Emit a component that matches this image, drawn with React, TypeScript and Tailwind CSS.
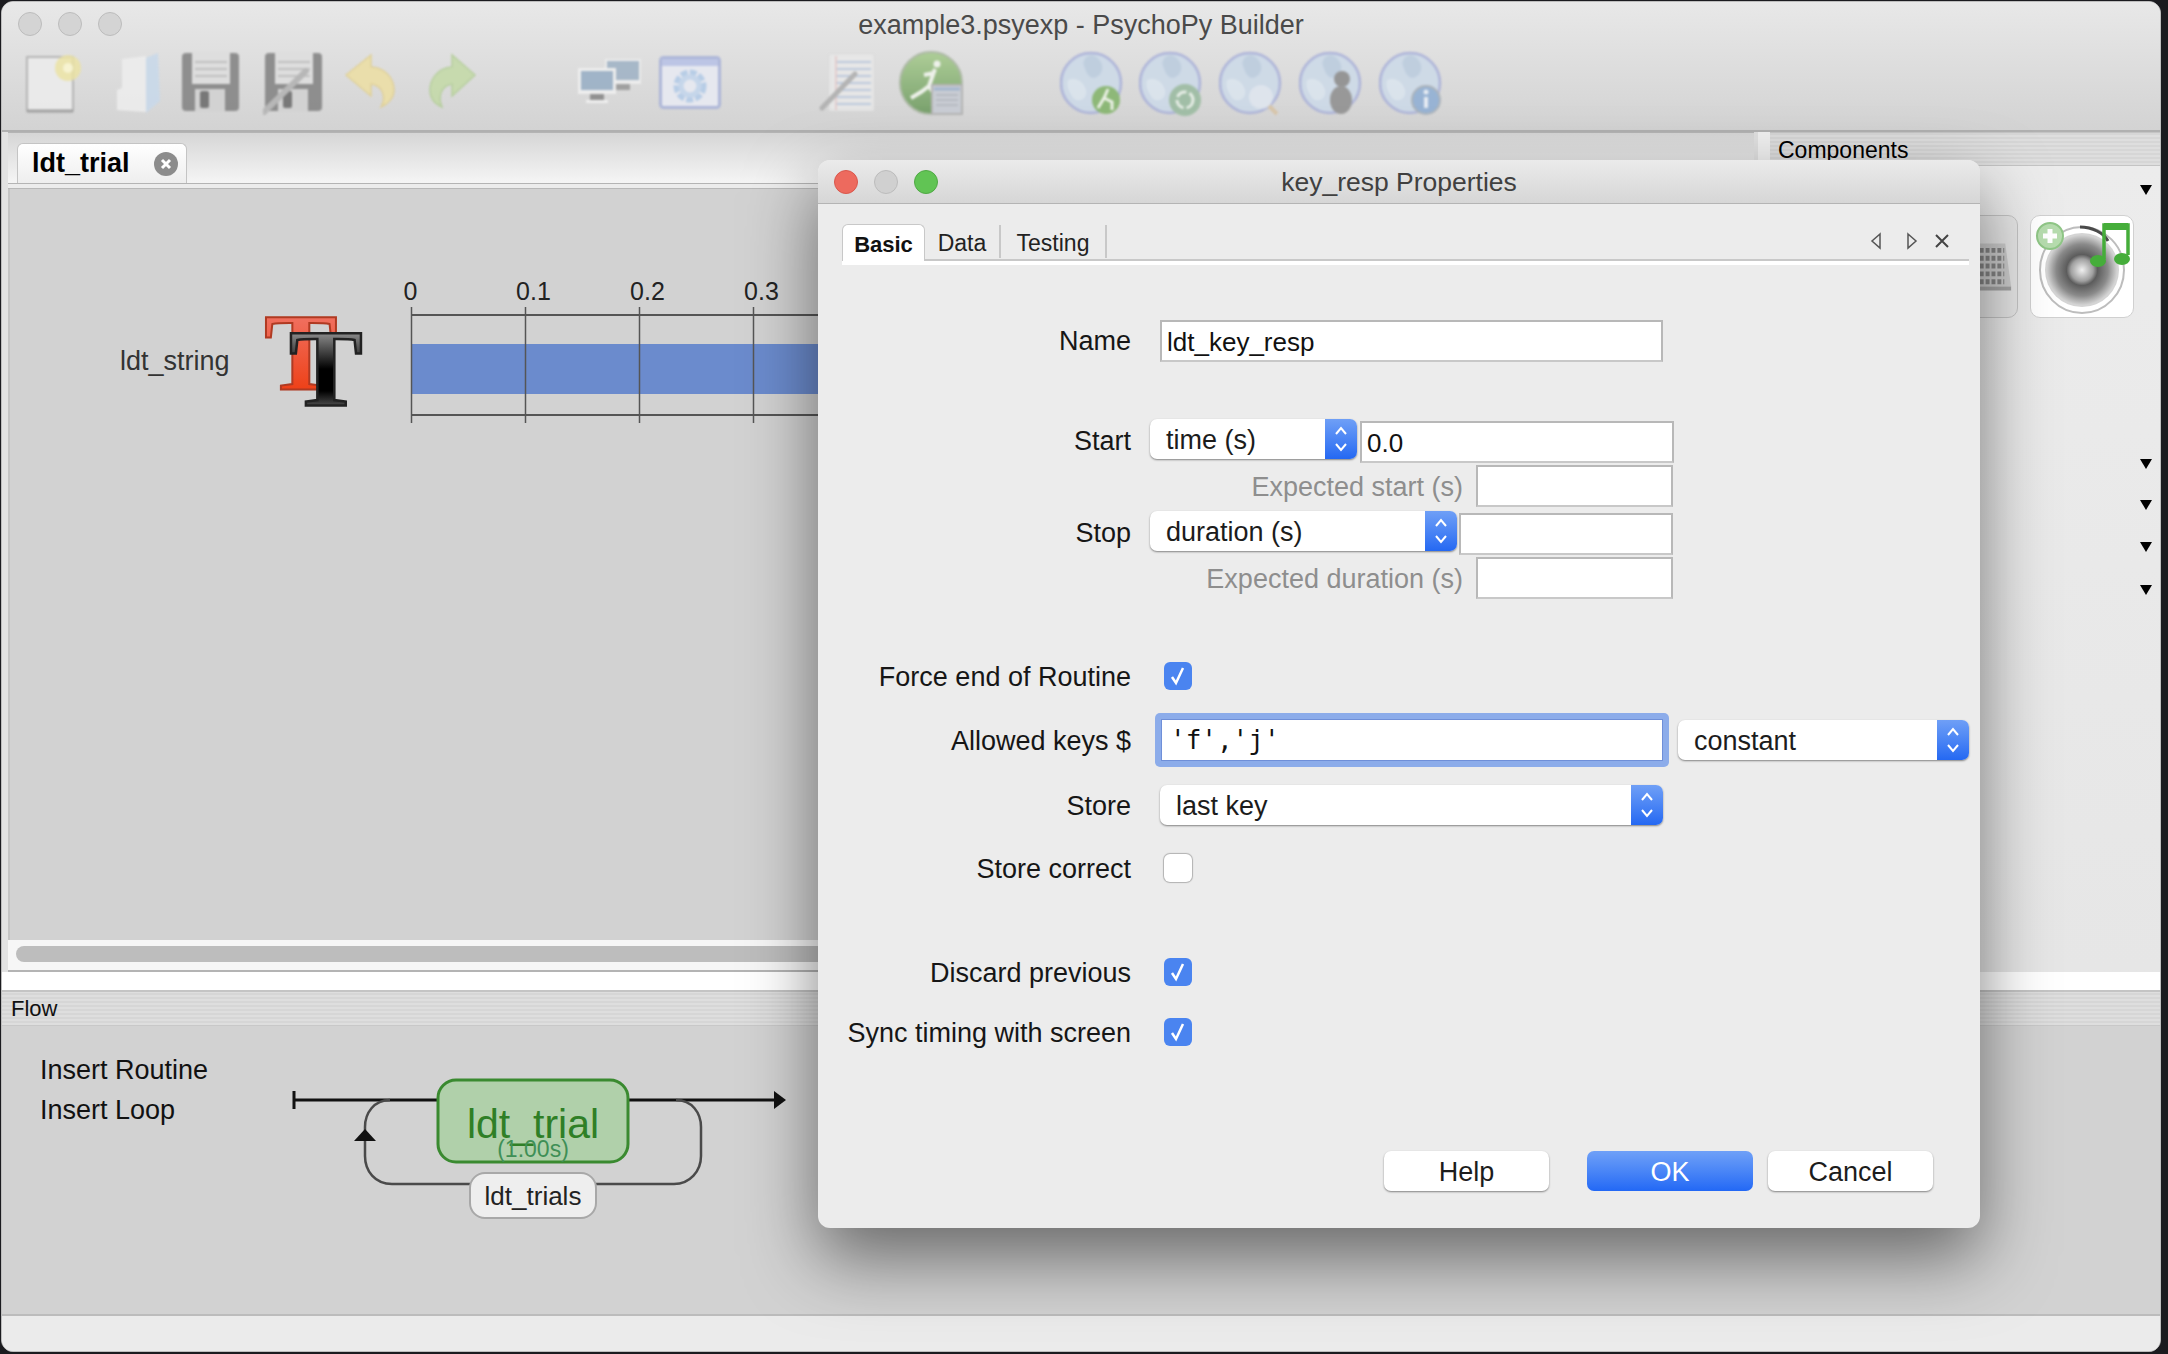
import { ReactNode } from "react";

const stripes =
    "bg-[repeating-linear-gradient(0deg,#dedede_0px,#dedede_2px,#d6d6d6_2px,#d6d6d6_4px)]";

function Lights({ colors }: { colors: string[] }) {
    return (
        <div className="flex gap-[16px]">
            {colors.map((c, i) => (
                <div
                    key={i}
                    className={`h-[24px] w-[24px] rounded-full border ${c}`}
                />
            ))}
        </div>
    );
}

function Floppy({ pen }: { pen?: boolean }) {
    return (
        <svg width="62" height="64" viewBox="0 0 62 64">
            <rect x="2" y="2" width="57" height="58" rx="4" fill="#868686" />
            <rect x="12" y="2" width="38" height="31" fill="#dedede" />
            <path d="M15 11H47M15 18H47M15 25H47" stroke="#bdbdbd" strokeWidth="2" />
            <rect x="15" y="38" width="30" height="22" fill="#d2d2d2" />
            <rect x="20" y="40" width="9" height="17" rx="2" fill="#6e6e6e" />
            {pen && (
                <path d="M43 20L0 62" stroke="#b4b4b4" strokeWidth="6" strokeLinecap="round" />
            )}
        </svg>
    );
}

function NewDoc() {
    return (
        <svg width="58" height="64" viewBox="0 0 58 64">
            <rect x="1" y="6" width="46" height="54" fill="#ececec" stroke="#b2b2b2" strokeWidth="2" />
            <path d="M1 60H47" stroke="#9a9a9a" strokeWidth="3" />
            <circle cx="42" cy="17" r="13" fill="#eee49a" opacity="0.8" />
            <circle cx="42" cy="17" r="5" fill="#faf6d0" />
        </svg>
    );
}

function FolderIcon() {
    return (
        <svg width="54" height="64" viewBox="0 0 54 64">
            <path d="M38 7L50 2L52 50L38 62Z" fill="#c9d9ea" />
            <path d="M14 8L38 5V61L9 59V39L14 37Z" fill="#ededed" />
        </svg>
    );
}

function ArrowIcon({ d, fill, stroke }: { d: string; fill: string; stroke: string }) {
    return (
        <svg width="52" height="60" viewBox="0 0 52 60">
            <path d={d} fill={fill} stroke={stroke} strokeWidth="1.5" />
        </svg>
    );
}

function Monitors() {
    return (
        <svg width="64" height="52" viewBox="0 0 64 52">
            <rect x="27" y="2" width="36" height="25" fill="#eeeeee" />
            <rect x="29" y="4" width="32" height="19" fill="#a2b4c6" />
            <rect x="38" y="27" width="14" height="6" fill="#9a9a9a" />
            <rect x="0" y="11" width="38" height="26" fill="#f0f0f0" />
            <rect x="3" y="14" width="32" height="19" fill="#9ab0c6" />
            <rect x="12" y="37" width="14" height="6" fill="#8a8a8a" />
            <rect x="8" y="43" width="22" height="3" fill="#f2f2f2" />
        </svg>
    );
}

function SettingsIcon() {
    return (
        <svg width="62" height="54" viewBox="0 0 62 54">
            <rect x="1.5" y="1.5" width="59" height="50" rx="3" fill="#e8eaf2" stroke="#a9b3d8" strokeWidth="3" />
            <rect x="3" y="3" width="56" height="7" fill="#b9c3e6" />
            <circle cx="31" cy="30" r="12" fill="none" stroke="#b4cce8" strokeWidth="9" strokeDasharray="6 2" />
            <circle cx="31" cy="30" r="9" fill="none" stroke="#c4d6ec" strokeWidth="5" />
        </svg>
    );
}

function NotesIcon() {
    return (
        <svg width="56" height="62" viewBox="0 0 56 62">
            <rect x="10" y="2" width="45" height="57" fill="#e8e8e8" stroke="#dadada" />
            <path d="M17 10H52M17 17H52M17 24H52M17 31H52M17 38H52M17 45H52M17 52H52" stroke="#bac8dc" strokeWidth="2" />
            <path d="M17 4V58" stroke="#e3c4c4" strokeWidth="1.5" />
            <path d="M36 22L3 56" stroke="#b0b0b0" strokeWidth="5" strokeLinecap="round" />
        </svg>
    );
}

function RunIcon() {
    return (
        <svg width="66" height="66" viewBox="0 0 66 66">
            <defs>
                <linearGradient id="run" x1="0" y1="0" x2="0" y2="1">
                    <stop offset="0" stopColor="#a9cc90" />
                    <stop offset="1" stopColor="#6f9b62" />
                </linearGradient>
            </defs>
            <circle cx="32" cy="33" r="31" fill="url(#run)" stroke="#a8b5a0" strokeWidth="2" />
            <circle cx="38" cy="14" r="3.5" fill="#f0f4ec" />
            <path d="M36 19L30 36L22 42L12 48M30 36L37 47M35 23L25 25" fill="none" stroke="#f0f4ec" strokeWidth="4" />
            <rect x="33" y="35" width="30" height="29" fill="#c8ccd4" stroke="#b0b0b0" strokeWidth="2" />
            <path d="M35 39H61" stroke="#9fb2cc" strokeWidth="3" />
            <path d="M37 45H59M37 50H59M37 55H59" stroke="#b4b8c0" strokeWidth="2" />
        </svg>
    );
}

function Globe({ children }: { children: ReactNode }) {
    return (
        <svg width="66" height="66" viewBox="0 0 66 66">
            <circle cx="31" cy="33" r="30" fill="#cddae8" stroke="#a9b0d8" strokeWidth="2.5" />
            <path d="M32 5C42 8 46 20 38 26C30 32 26 22 24 16C22 10 26 6 32 5Z" fill="#bccddf" />
            <path d="M8 30C16 26 24 32 26 40C28 50 16 54 12 46C9 41 6 36 8 30Z" fill="#dbe5ee" />
            {children}
        </svg>
    );
}

function Triangle() {
    return (
        <div className="h-0 w-0 border-x-[6px] border-t-[10px] border-x-transparent border-t-black" />
    );
}

function Speaker() {
    return (
        <svg width="100" height="100" viewBox="0 0 100 100">
            <defs>
                <radialGradient id="cone" cx="0.5" cy="0.5" r="0.5">
                    <stop offset="0" stopColor="#f0f0f0" />
                    <stop offset="0.3" stopColor="#a0a0a0" />
                    <stop offset="0.42" stopColor="#5c5c5c" />
                    <stop offset="0.7" stopColor="#8a8a8a" />
                    <stop offset="0.95" stopColor="#d4d4d4" />
                </radialGradient>
            </defs>
            <ellipse cx="50" cy="53" rx="42" ry="43" fill="#ffffff" stroke="#bdbdbd" strokeWidth="2" />
            <circle cx="50" cy="53" r="37" fill="url(#cone)" />
            <path d="M48 10C60 10 72 16 76 24" stroke="#4a4a4a" strokeWidth="3" fill="none" />
            <circle cx="18" cy="19" r="13" fill="#b6dcae" stroke="#8fc686" strokeWidth="2" />
            <path d="M18 12V26M11 19H25" stroke="#ffffff" strokeWidth="5" />
            <path d="M72 42V8H96V38" stroke="#45ad3a" strokeWidth="3.5" fill="none" />
            <path d="M72 6H96V13H72Z" fill="#45ad3a" />
            <ellipse cx="66" cy="44" rx="8" ry="6" fill="#45ad3a" />
            <ellipse cx="90" cy="42" rx="8" ry="6" fill="#45ad3a" />
        </svg>
    );
}

function Keyboard() {
    const rows = [0, 1, 2, 3, 4];
    return (
        <svg width="104" height="60" viewBox="0 0 104 60">
            <path d="M0 6H92L98 50H0Z" fill="#cccccc" />
            <path d="M0 50H98V54H0Z" fill="#a4a4a4" />
            {rows.map((r) => (
                <path
                    key={r}
                    d={`M0 ${13 + r * 8}H91`}
                    stroke="#858585"
                    strokeWidth="5"
                    strokeDasharray="4 2"
                />
            ))}
        </svg>
    );
}

function SelectBox({ label, width }: { label: string; width: string }) {
    return (
        <div
            className={`flex h-[40px] items-stretch rounded-[7px] bg-white shadow-[0_1px_2px_rgba(0,0,0,0.45)] ${width}`}
        >
            <div className="flex flex-1 items-center pl-[16px] pt-[3px] text-[27px] text-[#1c1c1c]">
                {label}
            </div>
            <div className="flex w-[32px] flex-col items-center justify-center rounded-r-[7px] bg-gradient-to-b from-[#6f9ff6] to-[#2468f2]">
                <svg width="16" height="32" viewBox="0 0 16 32">
                    <path d="M3 11L8 5L13 11M3 21L8 27L13 21" fill="none" stroke="#ffffff" strokeWidth="2" />
                </svg>
            </div>
        </div>
    );
}

function TextInput({ value, width, extra }: { value?: string; width: string; extra?: string }) {
    return (
        <div
            className={`flex h-[42px] items-center border-2 border-[#b8b8b8] border-b-[#c8c8c8] bg-white pl-[5px] pt-[3px] text-[26px] text-[#111] ${width} ${extra ?? ""}`}
        >
            {value}
        </div>
    );
}

function CheckBox({ checked }: { checked?: boolean }) {
    return checked ? (
        <div className="flex h-[28px] w-[28px] items-center justify-center rounded-[6px] bg-[#4a84f0]">
            <svg width="20" height="24" viewBox="0 0 20 24">
                <path d="M4 13L8 19L15 4" fill="none" stroke="#ffffff" strokeWidth="2.5" />
            </svg>
        </div>
    ) : (
        <div className="h-[28px] w-[28px] rounded-[6px] bg-white shadow-[0_0_1px_1px_rgba(0,0,0,0.25)]" />
    );
}

function Label({ children, grey }: { children: ReactNode; grey?: boolean }) {
    return (
        <div className={`whitespace-nowrap pt-[2px] text-right text-[27px] ${grey ? "text-[#8e8e8e]" : "text-[#161616]"}`}>
            {children}
        </div>
    );
}

function CheckRow({ label, checked, top }: { label: string; checked?: boolean; top: string }) {
    return (
        <div className={`flex h-[28px] items-center ${top}`}>
            <div className="w-[313px]">
                <Label>{label}</Label>
            </div>
            <div className="ml-[33px]">
                <CheckBox checked={checked} />
            </div>
        </div>
    );
}

function DialogButton({ label, primary, extra }: { label: string; primary?: boolean; extra?: string }) {
    return (
        <div
            className={`flex h-[40px] w-[165px] items-center justify-center rounded-[7px] pt-[2px] text-[27px] ${
                primary
                    ? "bg-gradient-to-b from-[#6fa0f7] to-[#2268f5] text-white"
                    : "bg-white text-[#1c1c1c] shadow-[0_1px_2px_rgba(0,0,0,0.45)]"
            } ${extra ?? ""}`}
        >
            {label}
        </div>
    );
}

function PropertiesDialog() {
    return (
        <div className="absolute left-[818px] top-[160px] flex h-[1068px] w-[1162px] flex-col rounded-[12px] bg-[#ececec] shadow-[0_30px_70px_rgba(0,0,0,0.5)]">
            <div className="relative flex h-[44px] items-center justify-center rounded-t-[12px] border-b border-[#b4b4b4] bg-gradient-to-b from-[#ebebeb] to-[#d6d6d6]">
                <div className="absolute left-[16px] top-[10px]">
                    <Lights
                        colors={[
                            "bg-[#ed6a5e] border-[#d9574c]",
                            "bg-[#d0d0d0] border-[#bcbcbc]",
                            "bg-[#61c454] border-[#50a945]",
                        ]}
                    />
                </div>
                <span className="pt-[2px] text-[26.5px] text-[#404040]">key_resp Properties</span>
            </div>

            <div className="flex h-[61px] flex-col">
                <div className="flex flex-1 items-end pl-[24px] pr-[11px]">
                    <div className="flex w-full items-end border-b-2 border-[#c8c8c8]">
                        <div className="-mb-[2px] flex h-[37px] w-[83px] items-center justify-center rounded-t-[6px] border border-b-0 border-[#c8c8c8] bg-white pt-[3px] text-[22px] font-bold text-[#111]">
                            Basic
                        </div>
                        <div className="mb-[1px] flex h-[33px] w-[76px] items-center justify-center border-r-2 border-[#c8c8c8] pt-[3px] text-[23px] text-[#222]">
                            Data
                        </div>
                        <div className="mb-[1px] flex h-[33px] w-[106px] items-center justify-center border-r-2 border-[#c8c8c8] pt-[3px] text-[23px] text-[#222]">
                            Testing
                        </div>
                        <div className="mb-[9px] ml-auto mr-[19px] flex items-center">
                            <svg width="12" height="18" viewBox="0 0 12 18">
                                <path d="M10 2L2 9L10 16Z" fill="none" stroke="#555" strokeWidth="1.5" />
                            </svg>
                            <svg className="ml-[24px]" width="12" height="18" viewBox="0 0 12 18">
                                <path d="M2 2L10 9L2 16Z" fill="none" stroke="#555" strokeWidth="1.5" />
                            </svg>
                            <svg className="ml-[16px]" width="16" height="16" viewBox="0 0 16 16">
                                <path d="M2 2L14 14M14 2L2 14" stroke="#444" strokeWidth="2" />
                            </svg>
                        </div>
                    </div>
                </div>
                <div className="ml-[24px] mr-[11px] h-[4px] bg-white" />
            </div>

            <div className="flex flex-1 flex-col">
                <div className="mt-[55px] flex h-[41px] items-center">
                    <div className="w-[313px]">
                        <Label>Name</Label>
                    </div>
                    <TextInput value="ldt_key_resp" width="w-[503px] ml-[29px]" extra="h-[41px]" />
                </div>

                <div className="mt-[58px] flex h-[43px] items-start">
                    <div className="w-[313px]">
                        <Label>Start</Label>
                    </div>
                    <div className="ml-[19px]">
                        <SelectBox label="time (s)" width="w-[207px]" />
                    </div>
                    <TextInput value="0.0" width="w-[314px] ml-[3px] mt-[2px]" />
                </div>
                <div className="mt-[3px] flex h-[42px] items-center">
                    <div className="w-[645px]">
                        <Label grey>Expected start (s)</Label>
                    </div>
                    <TextInput width="w-[197px] ml-[13px]" />
                </div>
                <div className="mt-[4px] flex h-[43px] items-start">
                    <div className="w-[313px]">
                        <Label>Stop</Label>
                    </div>
                    <div className="ml-[19px]">
                        <SelectBox label="duration (s)" width="w-[307px]" />
                    </div>
                    <TextInput width="w-[214px] ml-[2px] mt-[2px]" />
                </div>
                <div className="mt-[3px] flex h-[42px] items-center">
                    <div className="w-[645px]">
                        <Label grey>Expected duration (s)</Label>
                    </div>
                    <TextInput width="w-[197px] ml-[13px]" />
                </div>

                <CheckRow label="Force end of Routine" checked top="mt-[63px]" />

                <div className="mt-[23px] flex h-[54px] items-center">
                    <div className="w-[313px]">
                        <Label>Allowed keys $</Label>
                    </div>
                    <div className="ml-[24px] flex h-[54px] w-[514px] items-center justify-center rounded-[5px] bg-[#8cacea]">
                        <div className="flex h-[42px] w-[502px] items-center border border-[#6f8fd8] bg-white pl-[8px] font-['DejaVu_Sans_Mono',monospace] text-[26px] text-[#111]">
                            'f','j'
                        </div>
                    </div>
                    <div className="ml-[9px]">
                        <SelectBox label="constant" width="w-[291px]" />
                    </div>
                </div>

                <div className="mt-[18px] flex h-[40px] items-center">
                    <div className="w-[313px]">
                        <Label>Store</Label>
                    </div>
                    <div className="ml-[29px]">
                        <SelectBox label="last key" width="w-[503px]" />
                    </div>
                </div>

                <CheckRow label="Store correct" top="mt-[29px]" />
                <CheckRow label="Discard previous" checked top="mt-[76px]" />
                <CheckRow label="Sync timing with screen" checked top="mt-[32px]" />

                <div className="mt-[105px] flex pl-[566px]">
                    <DialogButton label="Help" />
                    <DialogButton label="OK" primary extra="ml-[38px] w-[166px]" />
                    <DialogButton label="Cancel" extra="ml-[15px]" />
                </div>
            </div>
        </div>
    );
}

function Toolbar() {
    return (
        <div className="flex h-[70px] items-center pl-[24px] opacity-90 blur-[0.8px]">
            <NewDoc />
            <div className="ml-[24px]">
                <FolderIcon />
            </div>
            <div className="ml-[18px]">
                <Floppy />
            </div>
            <div className="ml-[21px]">
                <Floppy pen />
            </div>
            <div className="ml-[19px]">
                <ArrowIcon
                    d="M2 22L27 2L27 14C43 15 50 27 50 37C50 45 44 51 37 54C42 45 40 33 27 31L27 43Z"
                    fill="#ecdfa6"
                    stroke="#e0cf92"
                />
            </div>
            <div className="ml-[31px]">
                <ArrowIcon
                    d="M48 22L25 2L25 14C10 15 3 27 3 37C3 45 8 51 15 54C11 45 13 33 25 31L25 43Z"
                    fill="#c5daaa"
                    stroke="#b3cd98"
                />
            </div>
            <div className="ml-[99px]">
                <Monitors />
            </div>
            <div className="ml-[17px]">
                <SettingsIcon />
            </div>
            <div className="ml-[98px]">
                <NotesIcon />
            </div>
            <div className="ml-[24px]">
                <RunIcon />
            </div>
            <div className="ml-[95px]">
                <Globe>
                    <circle cx="46" cy="50" r="14" fill="#86b56e" />
                    <path d="M48 39L44 48L38 58M44 48L52 52L52 60" stroke="#eef4e8" strokeWidth="3" fill="none" />
                </Globe>
            </div>
            <div className="ml-[13px]">
                <Globe>
                    <circle cx="46" cy="50" r="16" fill="#9cbca2" />
                    <circle cx="46" cy="50" r="8" fill="none" stroke="#e8f0e8" strokeWidth="3" strokeDasharray="11 3" />
                </Globe>
            </div>
            <div className="ml-[14px]">
                <Globe>
                    <circle cx="42" cy="47" r="12" fill="#dfe6ef" />
                    <path d="M50 56L58 64" stroke="#d8c4a6" strokeWidth="4" />
                </Globe>
            </div>
            <div className="ml-[14px]">
                <Globe>
                    <circle cx="43" cy="29" r="8" fill="#8e8e8e" />
                    <ellipse cx="42" cy="50" rx="11" ry="14" fill="#929292" />
                </Globe>
            </div>
            <div className="ml-[14px]">
                <Globe>
                    <circle cx="47" cy="50" r="14" fill="#92b0d4" stroke="#a8b0b8" strokeWidth="2" />
                    <path d="M47 47V58" stroke="#e8eef6" strokeWidth="4" />
                    <circle cx="47" cy="42" r="2.5" fill="#e8eef6" />
                </Globe>
            </div>
        </div>
    );
}

function Timeline() {
    const ticks = [
        { x: 401.5, label: "0" },
        { x: 515.5, label: "0.1" },
        { x: 629.5, label: "0.2" },
        { x: 743.5, label: "0.3" },
    ];
    return (
        <svg width="1744" height="300" viewBox="0 0 1744 300">
            <defs>
                <linearGradient id="tRed" x1="0" y1="0" x2="0" y2="1">
                    <stop offset="0.2" stopColor="#f07060" />
                    <stop offset="0.85" stopColor="#ee3d12" />
                </linearGradient>
                <linearGradient id="tBlack" x1="0" y1="0" x2="0" y2="1">
                    <stop offset="0.2" stopColor="#8e8e8e" />
                    <stop offset="0.5" stopColor="#000000" />
                    <stop offset="0.68" stopColor="#000000" />
                    <stop offset="0.88" stopColor="#7c7c7c" />
                </linearGradient>
            </defs>
            <text x="110" y="181" fontSize="27" fill="#333" fontFamily="Liberation Sans">
                ldt_string
            </text>
            <text
                x="291"
                y="201"
                fontSize="110"
                textAnchor="middle"
                fontWeight="bold"
                fontFamily="Liberation Serif"
                fill="url(#tRed)"
                stroke="#b03a22"
                strokeWidth="2"
            >
                T
            </text>
            <text
                x="316"
                y="217"
                fontSize="110"
                textAnchor="middle"
                fontWeight="bold"
                fontFamily="Liberation Serif"
                fill="url(#tBlack)"
                stroke="#222"
                strokeWidth="2.5"
            >
                T
            </text>
            <rect x="401.5" y="155" width="1130" height="50" fill="#6b8bcd" />
            <path d="M401.5 126H1530M401.5 226H1530" stroke="#555" strokeWidth="2" />
            {ticks.map((t) => (
                <g key={t.x}>
                    <path d={`M${t.x} 118V234`} stroke="#555" strokeWidth="1.5" />
                    <text
                        x={t.x + (t.label === "0" ? -1 : 8)}
                        y="111"
                        fontSize="25"
                        textAnchor="middle"
                        fill="#222"
                        fontFamily="Liberation Sans"
                    >
                        {t.label}
                    </text>
                </g>
            ))}
        </svg>
    );
}

function FlowDiagram() {
    return (
        <svg width="520" height="160" viewBox="0 0 520 160">
            <path d="M14 39H500" stroke="#111" strokeWidth="3" />
            <path d="M14 30V48" stroke="#111" strokeWidth="3" />
            <path d="M494 30L506 39L494 48Z" fill="#111" />
            <path
                d="M110 39C94 39 85 52 85 66V95C85 110 95 123 112 123H394C410 123 421 110 421 95V66C421 52 412 39 396 39"
                fill="none"
                stroke="#4a4a4a"
                strokeWidth="2.5"
            />
            <path d="M85 68L74 80H96Z" fill="#111" />
            <rect x="158" y="19" width="190" height="82" rx="18" fill="#b0d0aa" stroke="#3a8a30" strokeWidth="3" />
            <text x="253" y="77" fontSize="41" textAnchor="middle" fill="#2f7f26" fontFamily="Liberation Sans">
                ldt_trial
            </text>
            <text x="253" y="96" fontSize="23" textAnchor="middle" fill="#3f8f56" fontFamily="Liberation Sans">
                (1.00s)
            </text>
            <rect x="190" y="112" width="126" height="45" rx="15" fill="#eeeeee" stroke="#a8a8a8" strokeWidth="2" />
            <text x="253" y="144" fontSize="26" textAnchor="middle" fill="#222" fontFamily="Liberation Sans">
                ldt_trials
            </text>
        </svg>
    );
}

export default function App() {
    return (
        <div className="relative h-[1354px] w-[2168px] overflow-hidden bg-[#1b1b1f] font-['Liberation_Sans',Arial,sans-serif]">
            <div className="ml-px mt-px flex h-[1351px] w-[2160px] flex-col overflow-hidden rounded-[12px] border border-[#bdbdbd] bg-[#ececec]">
                {/* title bar and toolbar */}
                <div className="h-[130px] shrink-0 border-b-2 border-[#b0b0b0] bg-gradient-to-b from-[#e8e8e8] to-[#d3d3d3]">
                    <div className="relative flex h-[46px] items-center justify-center">
                        <div className="absolute left-[16px] top-[10px]">
                            <Lights
                                colors={[
                                    "bg-[#d4d4d4] border-[#bcbcbc]",
                                    "bg-[#d4d4d4] border-[#bcbcbc]",
                                    "bg-[#d4d4d4] border-[#bcbcbc]",
                                ]}
                            />
                        </div>
                        <span className="text-[27px] text-[#4a4a4a]">
                            example3.psyexp - PsychoPy Builder
                        </span>
                    </div>
                    <Toolbar />
                </div>

                {/* routine and components */}
                <div className="flex h-[840px] shrink-0">
                    <div className="flex w-[1752px] flex-col border-l-[6px] border-[#e2e2e2]">
                        <div className="flex h-[52px] items-end border-y border-[#b4b4b4] bg-gradient-to-b from-[#d6d6d6] to-[#f5f5f5] pl-[9px]">
                            <div className="flex h-[40px] w-[170px] items-center rounded-t-[6px] border border-b-0 border-[#c4c4c4] bg-gradient-to-b from-[#ffffff] to-[#eeeeee] pl-[14px]">
                                <span className="text-[27px] font-bold text-black">
                                    ldt_trial
                                </span>
                                <span className="ml-[24px] flex h-[24px] w-[24px] shrink-0 items-center justify-center rounded-full bg-[#8c8c8c]">
                                    <svg width="12" height="12" viewBox="0 0 12 12">
                                        <path d="M2 2L10 10M10 2L2 10" stroke="#fff" strokeWidth="3" />
                                    </svg>
                                </span>
                            </div>
                        </div>
                        <div className="h-[5px] border-b border-[#b8b8b8] bg-[#ececec]" />
                        <div className="flex-1 overflow-hidden border-l-2 border-[#c4c4c4] bg-[#d2d2d2]">
                            <Timeline />
                        </div>
                        <div className="h-[32px] border-b-2 border-[#b4b4b4] bg-[#f6f6f6] px-[8px] pt-[6px]">
                            <div className="h-[16px] rounded-full bg-[#bdbdbd]" />
                        </div>
                    </div>
                    <div className="w-[16px] border-l-4 border-[#e0e0e0] bg-[#f0f0f0]" />
                    <div className="flex flex-1 flex-col bg-[#ebebeb]">
                        <div className={`flex h-[34px] items-center border-y border-[#c4c4c4] pl-[8px] pt-[2px] text-[23px] text-black ${stripes}`}>
                            Components
                        </div>
                        <div className="flex flex-1 flex-col items-end bg-gradient-to-b from-[#ececec] to-[#e6e6e6] pr-[8px] pt-[19px]">
                            <Triangle />
                            <div className="mr-[18px] mt-[20px] flex gap-[12px]">
                                <div className="flex h-[103px] w-[104px] items-center justify-end rounded-[10px] border border-[#c4c4c4] bg-[#e6e6e6]">
                                    <Keyboard />
                                </div>
                                <div className="flex h-[103px] w-[104px] items-center justify-center rounded-[10px] border border-[#d0d0d0] bg-white">
                                    <Speaker />
                                </div>
                            </div>
                            <div className="mt-[141px]">
                                <Triangle />
                            </div>
                            <div className="mt-[31px]">
                                <Triangle />
                            </div>
                            <div className="mt-[32px]">
                                <Triangle />
                            </div>
                            <div className="mt-[33px]">
                                <Triangle />
                            </div>
                        </div>
                    </div>
                </div>

                <div className="h-[18px] shrink-0 bg-white" />

                {/* flow */}
                <div className="flex flex-1 flex-col border-t-2 border-[#c4c4c4]">
                    <div className={`flex h-[34px] items-center border-b border-[#c8c8c8] pl-[9px] text-[22px] text-[#111] ${stripes}`}>
                        Flow
                    </div>
                    <div className="flex h-[288px] items-start bg-[#d2d2d2] pl-[38px]">
                        <div className="flex w-[240px] flex-col pt-[24px] text-[27px] text-[#111]">
                            <div className="flex h-[40px] items-center">Insert Routine</div>
                            <div className="flex h-[40px] items-center">Insert Loop</div>
                        </div>
                        <div className="pt-[35px]">
                            <FlowDiagram />
                        </div>
                    </div>
                    <div className="flex-1 border-t-2 border-[#bcbcbc] bg-[#ebebeb]" />
                </div>
            </div>
            <PropertiesDialog />
        </div>
    );
}
